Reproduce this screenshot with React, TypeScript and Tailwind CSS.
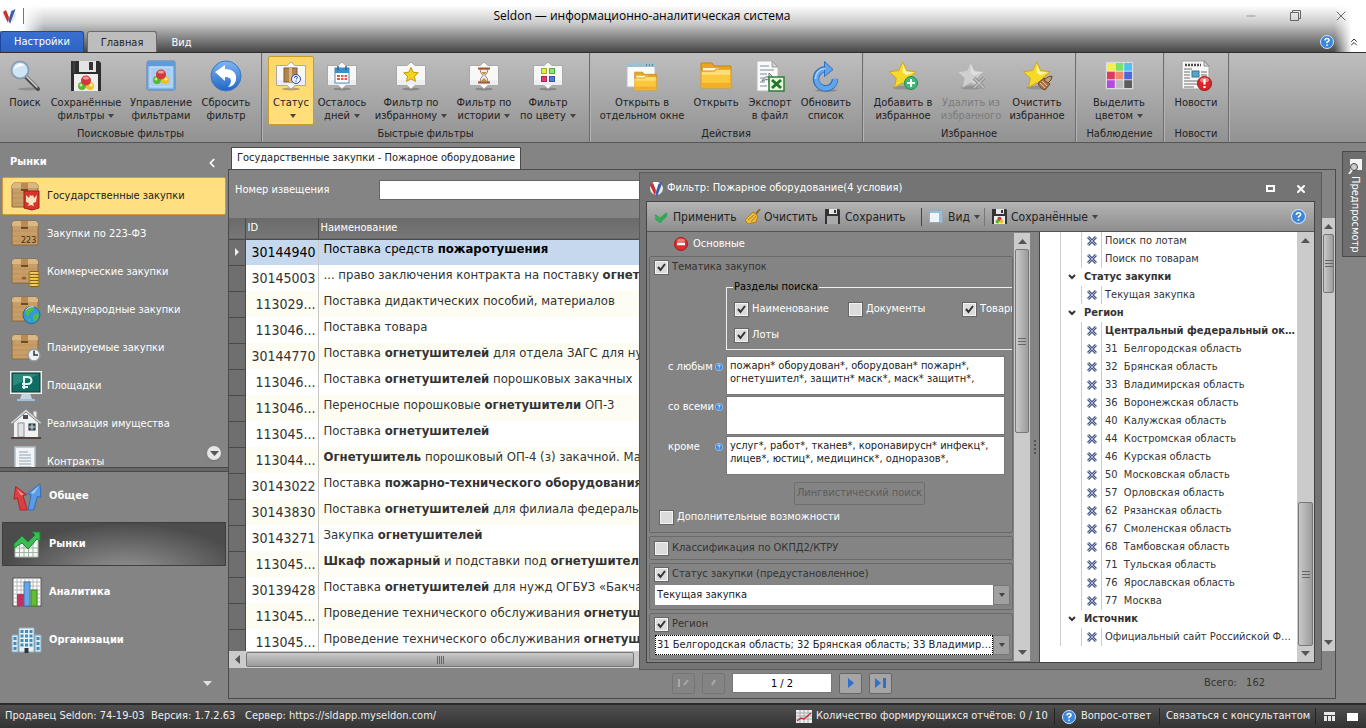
import clsx from "clsx";
import { ChevronLeft, ChevronsUp, Minus, X } from "lucide-react";
import type { ReactNode } from "react";

/* ---------- ribbon icons ---------- */

const Icon32 = ({ children }: { children: ReactNode }) => (
  <svg width="32" height="32" viewBox="0 0 32 32" aria-hidden="true">
    {children}
  </svg>
);

const Balls = ({ x, y }: { x: number; y: number }) => (
  <g>
    <circle cx={x - 4} cy={y + 3} r="4" fill="#5cb531" />
    <circle cx={x + 4} cy={y + 3} r="4" fill="#f0c020" />
    <circle cx={x - 5} cy={y + 2} r="1.5" fill="#b9ec8e" />
    <circle cx={x + 5} cy={y + 2} r="1.5" fill="#fff0a0" />
    <circle cx={x} cy={y - 2.5} r="5" fill="#d4373c" />
    <ellipse cx={x} cy={y - 5} rx="3" ry="1.6" fill="#f09a9a" />
  </g>
);

const SearchIcon = () => (
  <Icon32>
    <ellipse cx="20" cy="29" rx="11" ry="1.5" fill="#8d8d8d" />
    <path d="M17 17l12 12" stroke="#4c4c4c" strokeWidth="4" strokeLinecap="round" />
    <path d="M17 16l11 11" stroke="#d8d8d8" strokeWidth="1.5" strokeLinecap="round" />
    <circle cx="11" cy="10" r="8.5" fill="#cfe4f7" stroke="#8b9db0" strokeWidth="1.8" />
    <path d="M5 10a6.500 6.500 0 0 1 11-4.500c-3 0-8 1-11 4.500z" fill="#f6fbff" />
  </Icon32>
);

const DisketteIcon = () => (
  <Icon32>
    <path d="M1 1h28l2 2v28H1z" fill="#2d2d2d" />
    <path d="M4 1v12" stroke="#555" />
    <rect x="9" y="1" width="17" height="11" fill="#e4e4e4" />
    <rect x="19" y="2" width="4" height="8" fill="#333" />
    <rect x="4" y="14" width="24" height="17" fill="#eee" />
    <Balls x={16} y={23} />
  </Icon32>
);

const ManageIcon = () => (
  <Icon32>
    <rect x="2" y="1" width="28" height="29" rx="1.500" fill="#85b6e6" stroke="#4d85bd" />
    <rect x="3" y="2" width="26" height="4" fill="#5f9bd8" />
    <rect x="5" y="7" width="22" height="20" fill="#a6cdf2" stroke="#cfe5fa" />
    <Balls x={16} y={17} />
  </Icon32>
);

const ResetIcon = () => (
  <Icon32>
    <defs>
      <linearGradient id="reset-ball" x1="0" y1="0" x2="0" y2="1">
        <stop offset="0" stopColor="#7fb6f2" />
        <stop offset="1" stopColor="#1f66c4" />
      </linearGradient>
    </defs>
    <circle cx="16" cy="16" r="15" fill="url(#reset-ball)" stroke="#3d78c0" />
    <path
      d="M5 12l10-7v4c8 0 12 4 11 11-1 4-4 7-8 7 4-4 5-10-3-10v4z"
      fill="#fff"
    />
  </Icon32>
);

const Callout = ({ children }: { children: ReactNode }) => (
  <Icon32>
    <ellipse cx="16" cy="29" rx="9" ry="1.500" fill="#5b5b5b" opacity=".45" />
    <path
      d="M1.500 5.500h10.500L16 2l4 3.500h10.500v20h-10.500L16 29l-4-3.500h-10.500z"
      fill="#f8f8f8"
      stroke="#a9a9a9"
    />
    <path d="M2 20h28v5H2z" fill="#dfe4ea" opacity=".5" />
    {children}
  </Icon32>
);

const StatusIcon = () => (
  <Callout>
    <rect x="9" y="8" width="13" height="14" fill="#b08551" stroke="#7d5a30" />
    <rect x="14" y="8" width="3" height="14" fill="#dcb47c" />
    <circle cx="21" cy="19" r="4.500" fill="#e9f0ff" stroke="#2f4f9c" />
    <path d="M19.500 18q0-1.700 1.500-1.700t1.500 1.200q0 1-1.500 1.700M21 20.500v1.200" stroke="#2f4f9c" fill="none" />
  </Callout>
);

const CalendarIcon = () => (
  <Callout>
    <rect x="9" y="8" width="14" height="15" fill="#fff" stroke="#5b87ae" />
    <rect x="9" y="8" width="14" height="5" fill="#3d8fcb" />
    <path d="M12 6v4M20 6v4" stroke="#28648f" strokeWidth="1.500" />
    <path d="M11 15h10v5H11z" fill="#e05a50" />
    <path d="M11 17.500h10M14.500 15v5M18 15v5" stroke="#fff" />
  </Callout>
);

const STAR = "M16 1l4.300 9.400 10.200 1.200-7.600 7 2 10.200L16 23.700 7.100 28.800l2-10.200-7.600-7 10.200-1.200z";

const FavoriteFilterIcon = () => (
  <Callout>
    <path d={STAR} transform="translate(8 7) scale(.5)" fill="#f3d51f" stroke="#c29a10" strokeWidth="2" />
  </Callout>
);

const HistoryIcon = () => (
  <Callout>
    <path d="M12 9q0 4 3 6.500Q12 18 12 22h8q0-4-3-6.500Q20 13 20 9z" fill="#e8f0f5" stroke="#97836e" />
    <path d="M13.500 12h5L16 15zM13 21l3-3 3 3z" fill="#c88a3a" />
    <path d="M10 8.500h12M10 22.500h12" stroke="#a4562c" strokeWidth="2" />
  </Callout>
);

const ColorFilterIcon = () => (
  <Callout>
    <rect x="9.500" y="8.500" width="5" height="5" fill="#dff03c" stroke="#a3ad30" />
    <rect x="17.500" y="8.500" width="5" height="5" fill="#8be868" stroke="#5ea844" />
    <rect x="9.500" y="16.500" width="5" height="5" fill="#e2386c" stroke="#a92c50" />
    <rect x="17.500" y="16.500" width="5" height="5" fill="#5378e0" stroke="#3754a8" />
  </Callout>
);

const FolderShape = () => (
  <>
    <path d="M1 3h11l2 3h17v5H1z" fill="#e9a623" stroke="#c58612" />
    <path d="M3 8h16v4H3z" fill="#fff6d4" />
    <path d="M1 11h13l2-2h15v19H1z" fill="#fbc83d" stroke="#dd9a1b" />
    <path d="M2 12h13l2-2h13v5H2z" fill="#fddd7a" />
    <path d="M2 23h28v4H2z" fill="#f2ae2a" />
  </>
);

const OpenWindowIcon = () => (
  <Icon32>
    <rect x="1" y="3" width="28" height="24" fill="#fafafa" stroke="#b5bcc4" />
    <rect x="1" y="3" width="28" height="4" fill="#9cc0cf" />
    <path d="M20 5h1M23 5h1M26 5h1" stroke="#4a6c7c" strokeWidth="1.500" />
    <g transform="translate(8 10) scale(.72)">
      <FolderShape />
    </g>
  </Icon32>
);

const FolderIcon = () => (
  <Icon32>
    <FolderShape />
  </Icon32>
);

const ExportIcon = () => (
  <Icon32>
    <path d="M3 1h16l5 5v25H3z" fill="#fafafa" stroke="#b9b9b9" />
    <path d="M18 1v6h6z" fill="#d4d4d4" stroke="#9a9a9a" />
    <path d="M6 6h9M6 10h14M6 14h7M6 18h4M6 22h5M6 26h7" stroke="#a7b0b8" strokeWidth="1.500" />
    <path d="M8 21c2-4 5-5 7-4v-4l6 6-6 5v-4c-2-1-5 0-7 1z" fill="#ddd" stroke="#707070" />
    <rect x="15" y="17" width="15" height="14" fill="#e7f5e3" stroke="#2f7d35" strokeWidth="1.500" />
    <path d="M18 20l9 8M27 20l-9 8" stroke="#23752c" strokeWidth="3" />
  </Icon32>
);

const RefreshIcon = () => (
  <Icon32>
    <ellipse cx="16" cy="30.500" rx="11" ry="1.500" fill="#8a8a8a" />
    <path d="M17 9.500A9.500 9.500 0 1 0 25 19" stroke="#2f6fbe" strokeWidth="6.500" fill="none" />
    <path d="M17 9.500A9.500 9.500 0 1 0 25.300 18.500" stroke="#62a4ec" strokeWidth="4.500" fill="none" />
    <path d="M14.500 1.500L23 9.500l-8.500 7z" fill="#62a4ec" stroke="#2f6fbe" />
    <path d="M5.500 19A10 10 0 0 1 15.500 8.500" stroke="#a9d0f8" strokeWidth="1.500" fill="none" />
  </Icon32>
);

const StarShape = ({ muted }: { muted?: boolean }) => (
  <g transform="translate(1 1) scale(.92)">
    <ellipse cx="16" cy="29" rx="11" ry="2" fill="#777" opacity=".5" />
    <path d={STAR} fill={muted ? "#cfcfcf" : "#f6d929"} stroke={muted ? "#b5b5b5" : "#d0a313"} />
    <path d="M16 3l3.700 8.300 8.800 1.200-9 3-3.500-3z" fill={muted ? "#dfdfdf" : "#fdf3a0"} />
  </g>
);

const AddFavoriteIcon = () => (
  <Icon32>
    <StarShape />
    <circle cx="24" cy="23" r="6.500" fill="#3fb878" stroke="#1e8a50" />
    <path d="M24 19v8M20 23h8" stroke="#fff" strokeWidth="2" />
  </Icon32>
);

const RemoveFavoriteIcon = () => (
  <Icon32>
    <StarShape muted />
    <path d="M19 18l10 10M29 18L19 28" stroke="#8e8e8e" strokeWidth="3.500" />
    <path d="M19 18l10 10M29 18L19 28" stroke="#c4c4c4" strokeWidth="1.500" />
  </Icon32>
);

const ClearFavoriteIcon = () => (
  <Icon32>
    <StarShape />
    <path d="M17 23l6-5 6 6-5 6c-3-1-6-3-7-7z" fill="#a8744a" stroke="#704524" />
    <path d="M23 20l4-3 4-1-1 4-3 3z" fill="#c4a078" stroke="#704524" />
    <path d="M19 23l5 5M21 21l5 5" stroke="#e8c8a0" />
  </Icon32>
);

const PALETTE = ["#f3f04a", "#7fe069", "#4ec3ee", "#de3a60", "#f08a68", "#4f66dc", "#b54ae0", "#bdbdbd", "#5c5c5c"];

const PaletteIcon = () => (
  <Icon32>
    <rect x="3" y="2" width="27" height="27" fill="#f4f4f4" stroke="#c4c4c4" />
    {PALETTE.map((c, i) => (
      <rect key={c} x={4 + (i % 3) * 8.6} y={3 + Math.floor(i / 3) * 8.6} width="7.800" height="7.800" fill={c} />
    ))}
  </Icon32>
);

const NewsIcon = () => (
  <Icon32>
    <path d="M2 1h23l4 5v23H2z" fill="#f7f7f7" stroke="#a3a3a3" />
    <path d="M24 1v5h5z" fill="#d5d5d5" stroke="#8e8e8e" />
    <path d="M5 5h16" stroke="#4d4d4d" strokeWidth="2.500" strokeDasharray="2 1" />
    <path d="M4 9h8M4 12h6M4 15h6M4 18h6M4 21h10M4 24h10M4 27h10M21 12h6M21 15h6M12 21h8M12 24h5" stroke="#9d9d9d" strokeWidth="1.500" />
    <rect x="12" y="11" width="7" height="6" fill="#58a4cc" stroke="#3c7494" />
    <circle cx="24.500" cy="23.500" r="7" fill="#d8262b" stroke="#a01015" />
    <ellipse cx="24.500" cy="20" rx="4.500" ry="2.500" fill="#ee8080" />
    <path d="M24.500 19v5.500M24.500 26v2" stroke="#fff" strokeWidth="2.200" />
  </Icon32>
);

/* ---------- sidebar icons ---------- */

const BoxShape = () => (
  <>
    <path d="M2 5l2-2h22l2 2v22H2z" fill="#c79d68" stroke="#8b683d" />
    <path d="M2 5l2-2h22l2 2v3H2z" fill="#dab886" />
    <rect x="11" y="3" width="7" height="7" fill="#b98b52" />
    <path d="M11 10h7" stroke="#4f3516" strokeWidth="1.500" />
    <path d="M3 13h24M3 18h24M3 23h24" stroke="#bc9059" />
  </>
);

const BoxGovIcon = () => (
  <Icon32>
    <BoxShape />
    <path d="M14 11h15v17l-7 2-8-2z" fill="#d8342a" stroke="#a01f18" />
    <path
      d="M16 15l3 3 1-3 2 1 1-1 1 3 3-3-1 7-3 1 1 3-3-1-3 1 1-3-3-1z"
      fill="#f7e3c0"
    />
  </Icon32>
);

const Box223Icon = () => (
  <Icon32>
    <BoxShape />
    <text x="11" y="25" fontSize="8" fill="#3f2c14" fontFamily="DejaVu Sans">
      223
    </text>
  </Icon32>
);

const BoxCoinsIcon = () => (
  <Icon32>
    <BoxShape />
    {[17, 20, 23, 26, 29].map((y) => (
      <ellipse key={y} cx="24" cy={y} rx="5.500" ry="1.700" fill="#f5cf53" stroke="#7b5b17" />
    ))}
    <ellipse cx="14" cy="22" rx="2.500" ry="1.500" fill="#8a6430" />
  </Icon32>
);

const BoxGlobeIcon = () => (
  <Icon32>
    <BoxShape />
    <circle cx="21.500" cy="21" r="8.500" fill="#2f9bdc" stroke="#1f6aa8" />
    <path d="M15 17l5-4 4 1-2 4-3 1v3l-3-1zM23 21l5-2 1 4-4 5-2-3zM17 24l3 1v4z" fill="#57b947" />
    <path d="M16 16c2-3 6-4 8-3" stroke="#d8f0ff" fill="none" />
  </Icon32>
);

const BoxClockIcon = () => (
  <Icon32>
    <BoxShape />
    <circle cx="24" cy="23" r="6" fill="#eef2f4" stroke="#8f9aa2" strokeWidth="1.500" />
    <path d="M24 18.500V23h4" stroke="#333" strokeWidth="1.500" fill="none" />
  </Icon32>
);

const MonitorIcon = () => (
  <Icon32>
    <path d="M12 23h8l2 6H10z" fill="#c5d3dd" />
    <path d="M7 29h18v2H7z" fill="#9fc0dc" />
    <rect x="0" y="1" width="32" height="23" fill="#e9eff2" />
    <rect x="2" y="3" width="28" height="19" fill="#0f6e64" stroke="#11332f" />
    <path d="M3 4h26L3 16z" fill="#2a8a7c" />
    <path d="M14 19V7h4a3 3 0 0 1 0 7h-6M12 17h6" stroke="#d9f4ec" strokeWidth="2" fill="none" />
  </Icon32>
);

const HouseIcon = () => (
  <Icon32>
    <path d="M23 3h4v7h-4z" fill="#e8e8e8" stroke="#8d8d8d" />
    <path d="M4 14L16 3l12 11v16H4z" fill="#f2f2f2" />
    <path d="M0 15L16 1l16 14-2 1L16 4 2 16z" fill="#d5d8da" stroke="#858a8c" />
    <rect x="13" y="7" width="5" height="4" fill="#4b4f55" />
    <rect x="8" y="15" width="6" height="14" fill="#dfe3e5" stroke="#8d9397" />
    <rect x="19" y="16" width="6" height="6" fill="#4a6a74" stroke="#20262a" />
    <path d="M22 16v6M19 19h6" stroke="#c8dade" />
    <path d="M1 30h30" stroke="#53433c" strokeWidth="2" />
  </Icon32>
);

const ContractIcon = () => (
  <Icon32>
    <rect x="5" y="1" width="20" height="30" fill="#f2f5f7" stroke="#b4bfc7" strokeWidth="1.500" />
    <path d="M9 6h9M9 9h12M9 12h12M9 15h12M9 18h12M9 21h12M9 24h12" stroke="#8fa1ad" strokeWidth="1" />
  </Icon32>
);

const GeneralIcon = () => (
  <Icon32>
    <g transform="translate(2 3) scale(.9)">
      <path d="M1 18L3 4l12 9-4 1 5 16H8L5 17z" fill="#dd3f40" stroke="#aa2022" />
      <path d="M17 30l3-17-4-1L30 1l1 15-4-1-4 15z" fill="#5a9ce8" stroke="#2b69b4" />
      <path d="M4 6l8 7-3 1z" fill="#f29a98" />
      <path d="M29 3l-9 8 3 1z" fill="#a9cdf6" />
    </g>
  </Icon32>
);

const MarketsIcon = () => (
  <Icon32>
    <path d="M4 17l8-5 8 6 7-9v20H4z" fill="#f4f7f4" stroke="#aab8aa" />
    <path d="M4 20h23M4 24.500h23M8.500 14v15M13 12v17M17.500 15v14M22 12v17" stroke="#a0b4a0" />
    <path d="M3 16l8-8 6 6 7-7-3-3h8v9l-3-2-9 10-6-6-8 5z" fill="#3bbd55" stroke="#1d8435" />
  </Icon32>
);

const AnalyticsIcon = () => (
  <Icon32>
    <rect x="2" y="2" width="28" height="28" fill="#fff" stroke="#555" />
    <path d="M6 2v28M10 2v28M14 2v28M18 2v28M22 2v28M26 2v28M2 6h28M2 10h28M2 14h28M2 18h28M2 22h28M2 26h28" stroke="#b8b8b8" />
    <rect x="6" y="18" width="7" height="12" fill="#c2305e" />
    <rect x="13" y="6" width="6" height="24" fill="#6aa5e6" stroke="#3d74b4" />
    <rect x="20" y="14" width="6" height="16" fill="#62bd35" stroke="#3d8a1c" />
  </Icon32>
);

const OrganizationsIcon = () => (
  <Icon32>
    <path d="M1 11h6v17H1zM24 11h6v17h-6z" fill="#d7e8f2" stroke="#87a8bb" />
    <path d="M8 4h15v24H8z" fill="#e6f1f8" stroke="#90aec0" />
    <path d="M11 6v17M15.500 6v17M20 6v17" stroke="#3e8bb8" strokeWidth="3" strokeDasharray="3 1.500" />
    <path d="M4 13v14M27 13v14" stroke="#3e8bb8" strokeWidth="3" strokeDasharray="3 2" />
    <rect x="13.500" y="24" width="4" height="5" fill="#333" />
  </Icon32>
);

/* ---------- small icons ---------- */

const Logo = () => (
  <svg width="15" height="16" viewBox="0 0 15 16" aria-hidden="true">
    <circle cx="7.500" cy="7.500" r="6.500" fill="#e9ebf2" />
    <path d="M1 4l3-2 3 7-1 6z" fill="#c9302f" />
    <path d="M13.500 1L8 16 6.500 12l3-9z" fill="#3c5fa8" />
    <path d="M4 1l3 8 2-8z" fill="#fff" />
  </svg>
);

const HelpBall = ({ size }: { size: number }) => (
  <svg width={size} height={size} viewBox="0 0 14 14" aria-hidden="true">
    <circle cx="7" cy="7" r="6.500" fill="#3a86dc" stroke="#cfe3fa" />
    <path d="M5 5.500q0-2 2-2t2 1.700q0 1-2 2v1M7 9.500v1.500" stroke="#fff" strokeWidth="1.500" fill="none" />
  </svg>
);

const Arrow = ({ up, className }: { up?: boolean; className?: string }) => (
  <svg width="9" height="5" viewBox="0 0 9 5" className={clsx("shrink-0", className)} aria-hidden="true">
    <path d={up ? "M0 5l4.500-5L9 5z" : "M0 0l4.500 5L9 0z"} fill="currentColor" />
  </svg>
);

const DropMark = () => (
  <svg width="6" height="4" viewBox="0 0 6 4" className="ml-1 inline-block align-middle" aria-hidden="true">
    <path d="M0 0h6L3 4z" fill="#444" />
  </svg>
);

const BlueCross = () => (
  <svg width="10" height="10" viewBox="0 0 10 10" className="shrink-0" aria-hidden="true">
    <path d="M1 1l8 8M9 1L1 9" stroke="#4a5a82" strokeWidth="3" />
    <path d="M1 1l8 8M9 1L1 9" stroke="#a9b8dc" strokeWidth="1" />
  </svg>
);

const MiniDisk = ({ colored }: { colored?: boolean }) => (
  <svg width="15" height="15" viewBox="0 0 15 15" aria-hidden="true">
    <path d="M0 0h14l1 1v14H0z" fill="#333" />
    <rect x="4" y="0" width="8" height="5" fill="#e6e6e6" />
    <rect x="9" y="1" width="2" height="3" fill="#333" />
    <rect x="2" y="7" width="11" height="8" fill={colored ? "#eee" : "#aaa"} />
    {colored && (
      <>
        <circle cx="7.500" cy="10" r="2.200" fill="#d4373c" />
        <circle cx="5.500" cy="12.500" r="2" fill="#5cb531" />
        <circle cx="9.500" cy="12.500" r="2" fill="#f0c020" />
      </>
    )}
  </svg>
);

/* ---------- data ---------- */

interface RibbonButton {
  lines: string[];
  icon: ReactNode;
  width: string;
  drop?: boolean;
  active?: boolean;
  disabled?: boolean;
}

const RIBBON: { title: string; width: string; pad?: string; buttons: RibbonButton[] }[] = [
  {
    title: "Поисковые фильтры",
    width: "w-[262px]",
    buttons: [
      { lines: ["Поиск"], icon: <SearchIcon />, width: "w-[50px]" },
      { lines: ["Сохранённые", "фильтры"], icon: <DisketteIcon />, width: "w-[72px]", drop: true },
      { lines: ["Управление", "фильтрами"], icon: <ManageIcon />, width: "w-[78px]" },
      { lines: ["Сбросить", "фильтр"], icon: <ResetIcon />, width: "w-[52px]" },
    ],
  },
  {
    title: "Быстрые фильтры",
    width: "w-[328px]",
    pad: "pl-[6px]",
    buttons: [
      { lines: ["Статус", ""], icon: <StatusIcon />, width: "w-[46px]", drop: true, active: true },
      { lines: ["Осталось", "дней"], icon: <CalendarIcon />, width: "w-[56px]", drop: true },
      { lines: ["Фильтр по", "избранному"], icon: <FavoriteFilterIcon />, width: "w-[82px]", drop: true },
      { lines: ["Фильтр по", "истории"], icon: <HistoryIcon />, width: "w-[64px]", drop: true },
      { lines: ["Фильтр", "по цвету"], icon: <ColorFilterIcon />, width: "w-[64px]", drop: true },
    ],
  },
  {
    title: "Действия",
    width: "w-[273px]",
    pad: "pl-[6px]",
    buttons: [
      { lines: ["Открыть в", "отдельном окне"], icon: <OpenWindowIcon />, width: "w-[92px]" },
      { lines: ["Открыть"], icon: <FolderIcon />, width: "w-[56px]" },
      { lines: ["Экспорт", "в файл"], icon: <ExportIcon />, width: "w-[52px]" },
      { lines: ["Обновить", "список"], icon: <RefreshIcon />, width: "w-[60px]" },
    ],
  },
  {
    title: "Избранное",
    width: "w-[213px]",
    pad: "pl-[6px]",
    buttons: [
      { lines: ["Добавить в", "избранное"], icon: <AddFavoriteIcon />, width: "w-[68px]" },
      { lines: ["Удалить из", "избранного"], icon: <RemoveFavoriteIcon />, width: "w-[68px]", disabled: true },
      { lines: ["Очистить", "избранное"], icon: <ClearFavoriteIcon />, width: "w-[64px]" },
    ],
  },
  {
    title: "Наблюдение",
    width: "w-[88px]",
    pad: "pl-[10px]",
    buttons: [{ lines: ["Выделить", "цветом"], icon: <PaletteIcon />, width: "w-[66px]", drop: true }],
  },
  {
    title: "Новости",
    width: "w-[65px]",
    pad: "pl-[6px]",
    buttons: [{ lines: ["Новости"], icon: <NewsIcon />, width: "w-[52px]" }],
  },
];

const MARKETS = [
  { label: "Государственные закупки", icon: <BoxGovIcon />, active: true },
  { label: "Закупки по 223-ФЗ", icon: <Box223Icon /> },
  { label: "Коммерческие закупки", icon: <BoxCoinsIcon /> },
  { label: "Международные закупки", icon: <BoxGlobeIcon /> },
  { label: "Планируемые закупки", icon: <BoxClockIcon /> },
  { label: "Площадки", icon: <MonitorIcon /> },
  { label: "Реализация имущества", icon: <HouseIcon /> },
  { label: "Контракты", icon: <ContractIcon /> },
];

const SECTIONS = [
  { label: "Общее", icon: <GeneralIcon /> },
  { label: "Рынки", icon: <MarketsIcon />, active: true },
  { label: "Аналитика", icon: <AnalyticsIcon /> },
  { label: "Организации", icon: <OrganizationsIcon /> },
];

const ROWS: { id: string; name: ReactNode }[] = [
  { id: "30144940", name: <>Поставка средств <b>пожаротушения</b></> },
  { id: "30145003", name: <>... право заключения контракта на поставку <b>огнетушителей</b></> },
  { id: "113029...", name: "Поставка дидактических пособий, материалов" },
  { id: "113046...", name: "Поставка товара" },
  { id: "30144770", name: <>Поставка <b>огнетушителей</b> для отдела ЗАГС для нужд</> },
  { id: "113046...", name: <>Поставка <b>огнетушителей</b> порошковых закачных</> },
  { id: "113046...", name: <>Переносные порошковые <b>огнетушители</b> ОП-3</> },
  { id: "113045...", name: <>Поставка <b>огнетушителей</b></> },
  { id: "113044...", name: <><b>Огнетушитель</b> порошковый ОП-4 (з) закачной. Масса</> },
  { id: "30143022", name: <>Поставка <b>пожарно-технического оборудования</b></> },
  { id: "30143830", name: <>Поставка <b>огнетушителей</b> для филиала федерального</> },
  { id: "30143271", name: <>Закупка <b>огнетушителей</b></> },
  { id: "113045...", name: <><b>Шкаф пожарный</b> и подставки под <b>огнетушители</b></> },
  { id: "30139428", name: <>Поставка <b>огнетушителей</b> для нужд ОГБУЗ «Бакчарская»</> },
  { id: "113045...", name: <>Проведение технического обслуживания <b>огнетушителей</b></> },
  { id: "113045...", name: <>Проведение технического обслуживания <b>огнетушителей</b></> },
];

const TREE: { title?: string; items: string[] }[] = [
  { items: ["Поиск по лотам", "Поиск по товарам"] },
  { title: "Статус закупки", items: ["Текущая закупка"] },
  {
    title: "Регион",
    items: [
      "Центральный федеральный округ",
      "31  Белгородская область",
      "32  Брянская область",
      "33  Владимирская область",
      "36  Воронежская область",
      "40  Калужская область",
      "44  Костромская область",
      "46  Курская область",
      "50  Московская область",
      "57  Орловская область",
      "62  Рязанская область",
      "67  Смоленская область",
      "68  Тамбовская область",
      "71  Тульская область",
      "76  Ярославская область",
      "77  Москва",
    ],
  },
  { title: "Источник", items: ["Официальный сайт Российской Федерации"] },
];

/* ---------- shared controls ---------- */

function Checkbox({ label, checked, className }: { label: string; checked?: boolean; className?: string }) {
  return (
    <label className={clsx("flex items-center gap-[4px] whitespace-nowrap", className)}>
      <span className="relative flex size-[13px] shrink-0">
        <input
          type="checkbox"
          defaultChecked={checked}
          className="peer size-[13px] appearance-none border border-[#f4f4f4] bg-[#dcdcdc] outline outline-[#666]"
        />
        <svg
          viewBox="0 0 13 13"
          className="pointer-events-none absolute inset-0 hidden peer-checked:block"
          aria-hidden="true"
        >
          <path d="M3 6l2.500 3L10 3" stroke="#333" strokeWidth="2" fill="none" />
        </svg>
      </span>
      {label}
    </label>
  );
}

function VScroll({ className, thumb, atEnd }: { className?: string; thumb: string; atEnd?: boolean }) {
  return (
    <div className={clsx("flex shrink-0 flex-col items-center bg-[#cbcbcb] py-[6px] text-[#555]", className)}>
      <Arrow up />
      <div className={clsx("flex w-full flex-1 flex-col items-center px-px py-[5px]", atEnd && "justify-end")}>
        <div
          className={clsx(
            "flex w-full flex-col items-center justify-center gap-[2px] rounded-[2px] border border-[#777] bg-linear-to-r from-[#c9c9c9] to-[#9c9c9c]",
            thumb,
          )}
        >
          <i className="h-px w-2 bg-[#666]" />
          <i className="h-px w-2 bg-[#666]" />
          <i className="h-px w-2 bg-[#666]" />
        </div>
      </div>
      <Arrow />
    </div>
  );
}

/* ---------- page parts ---------- */

function TitleBar() {
  return (
    <header className="relative flex h-[53px] shrink-0 flex-col border-b border-[#303030] bg-linear-to-b from-white from-10% via-[#cacaca] via-45% to-[#484848]">
      {/* white glow in the corners */}
      <div className="absolute top-0 left-0 h-[31px] w-[44px] bg-linear-to-r from-white from-50% to-transparent" />
      <div className="absolute top-0 right-0 h-[52px] w-[32px] bg-linear-to-l from-white from-45% to-transparent" />
      <div className="relative flex h-[31px] items-center pl-[2px]">
        <Logo />
        <i className="ml-[6px] h-4 w-px bg-[#777]" />
        <h1 className="flex-1 pr-[106px] text-center font-['Open_Sans','Noto_Sans',sans-serif] text-[12px] text-black">
          Seldon — информационно-аналитическая система
        </h1>
        <div className="absolute right-[17px] flex items-center gap-[32px] text-[#666]">
          <button type="button" aria-label="Свернуть"><Minus size={14} strokeWidth={1} /></button>
          <button type="button" aria-label="Восстановить">
            <svg width="11" height="11" viewBox="0 0 11 11" fill="none" stroke="currentColor">
              <path d="M.5 2.500h8v8h-8zM2.500 2.500v-2h8v8h-2" />
            </svg>
          </button>
          <button type="button" aria-label="Закрыть"><X size={16} strokeWidth={1.500} /></button>
        </div>
      </div>
      <nav className="relative flex flex-1 items-stretch text-white">
        <button type="button" className="w-[84px] rounded-t-[3px] border border-b-0 border-[#1d469c] bg-linear-to-b from-[#3a6fd0] to-[#2c64c4]">
          Настройки
        </button>
        <button type="button" className="ml-[3px] w-[70px] rounded-t-[3px] border border-b-0 border-[#6a6a6a] bg-[#bdbdbd] pt-[2px] text-[#222]">
          Главная
        </button>
        <button type="button" className="w-[49px] pt-[3px]">Вид</button>
        <div className="ml-auto flex items-center gap-[14px] pr-[6px] text-[#333]">
          <button type="button" aria-label="Справка"><HelpBall size={14} /></button>
          <button type="button" aria-label="Свернуть ленту"><ChevronsUp size={12} /></button>
        </div>
      </nav>
    </header>
  );
}

function Ribbon() {
  return (
    <div className="flex h-[90px] shrink-0 border-b border-[#555] bg-linear-to-b from-[#bebebe] to-[#929292] text-[#222]">
      {RIBBON.map((group) => (
        <section
          key={group.title}
          className={clsx("flex shrink-0 flex-col border-r border-[#6d6d6d] shadow-[1px_0_0_#b4b4b4]", group.width)}
        >
          <div className={clsx("flex h-[74px] items-start pt-[3px]", group.pad)}>
            {group.buttons.map((b) => (
              <button
                type="button"
                key={b.lines.join(" ")}
                disabled={b.disabled}
                className={clsx(
                  "flex h-[69px] flex-col items-center rounded-[2px] border pt-[3px] leading-[13px] whitespace-nowrap",
                  b.width,
                  b.active ? "border-[#c99a2c] bg-linear-to-b from-[#ffd766] to-[#ffe07c]" : "border-transparent",
                  b.disabled && "text-[#7b7b7b]",
                )}
              >
                {b.icon}
                <span className="mt-[4px]">
                  {b.lines.map((line, i) => (
                    <span key={i} className="block">
                      {line}
                      {b.drop && i === b.lines.length - 1 && <DropMark />}
                    </span>
                  ))}
                </span>
              </button>
            ))}
          </div>
          <h2 className="text-center leading-[14px]">{group.title}</h2>
        </section>
      ))}
    </div>
  );
}

function Sidebar() {
  return (
    <aside className="flex w-[228px] shrink-0 flex-col text-white">
      <div className="flex h-[34px] shrink-0 items-center justify-between pt-[5px] pr-[9px] pl-[10px]">
        <h2 className="font-bold">Рынки</h2>
        <button type="button" aria-label="Свернуть панель"><ChevronLeft size={14} strokeWidth={3} /></button>
      </div>
      <div className="relative min-h-0 flex-1 overflow-hidden px-[2px]">
        <ul>
          {MARKETS.map((m) => (
            <li key={m.label}>
              <a
                href="#"
                className={clsx(
                  "flex h-[38px] items-center gap-[5px] rounded-[2px] border pl-[7px]",
                  m.active ? "border-[#d09a34] bg-[#ffdf80] text-[#222]" : "border-transparent",
                )}
              >
                {m.icon}
                {m.label}
              </a>
            </li>
          ))}
        </ul>
        <button
          type="button"
          aria-label="Прокрутить вниз"
          className="absolute right-[7px] bottom-[7px] flex size-[14px] items-center justify-center rounded-full bg-[#e6e6e6] text-[#555] shadow"
        >
          <Arrow />
        </button>
      </div>
      <div className="h-[5px] shrink-0 border-y border-[#4a4a4a] bg-[#666]" />
      <ul className="shrink-0 px-[2px] font-bold">
        {SECTIONS.map((s) => (
          <li key={s.label} className="h-[48px] py-[2px]">
            <a
              href="#"
              className={clsx(
                "flex h-[44px] items-center gap-[6px] border pl-[8px]",
                s.active
                  ? "border-[#3f3f3f] bg-[#585858] bg-radial-[at_55%_120%] from-[#959595] to-[#4c4c4c] to-70%"
                  : "border-transparent",
              )}
            >
              {s.icon}
              {s.label}
            </a>
          </li>
        ))}
      </ul>
      <div className="flex h-[39px] shrink-0 items-center justify-end pr-[16px] text-[#e0e0e0]">
        <Arrow />
      </div>
    </aside>
  );
}

function Grid() {
  return (
    <div className="flex min-h-0 flex-1">
      <div className="flex min-w-0 flex-1 flex-col">
        <div className="min-h-0 flex-1 overflow-hidden bg-white">
          <table className="w-full table-fixed border-collapse text-[13px] text-[#333]">
            <colgroup>
              <col className="w-[16px]" />
              <col className="w-[73px]" />
              <col className="w-[322px]" />
              <col />
            </colgroup>
            <thead>
              <tr className="h-[21px] border-b border-[#4a4a4a] bg-linear-to-b from-[#6a6a6a] to-[#777] text-left text-[11px] text-white">
                <th className="border-r border-[#4a4a4a]" />
                <th className="border-r border-[#4a4a4a] pl-[2px] font-normal">ID</th>
                <th className="pl-[2px] font-normal">Наименование</th>
                <th />
              </tr>
            </thead>
            <tbody>
              {ROWS.map((row, i) => (
                <tr
                  key={i}
                  className={clsx(
                    "h-[26px]",
                    i === 0 ? "bg-[#c5d8ee] text-black" : i % 2 === 0 ? "bg-[#fdfdf3]" : "bg-white",
                  )}
                >
                  <td className="border border-l-0 border-[#4a4a4a] bg-[#6f6f6f]">
                    {i === 0 && (
                      <svg width="4" height="8" viewBox="0 0 4 8" className="mx-auto" aria-hidden="true">
                        <path d="M0 0l4 4-4 4z" fill="#eee" />
                      </svg>
                    )}
                  </td>
                  <td className="border-r border-[#c8c8c8] p-0 pr-[2px] text-right text-[14px] leading-[18px]">{row.id}</td>
                  <td className="overflow-hidden p-0 pb-[6px] pl-[5px] leading-[18px] whitespace-nowrap">{row.name}</td>
                  <td />
                </tr>
              ))}
            </tbody>
          </table>
        </div>
        {/* horizontal scroll bar */}
        <div className="flex h-[17px] shrink-0 items-center bg-[#cbcbcb] pl-[6px]">
          <svg width="5" height="9" viewBox="0 0 5 9" aria-hidden="true">
            <path d="M5 0v9L0 4.500z" fill="#555" />
          </svg>
          <div className="ml-[6px] flex h-[15px] w-[388px] items-center justify-center gap-[1px] rounded-[2px] border border-[#777] bg-linear-to-b from-[#c9c9c9] to-[#9c9c9c]">
            <i className="h-2 w-px bg-[#666]" />
            <i className="h-2 w-px bg-[#666]" />
            <i className="h-2 w-px bg-[#666]" />
            <i className="h-2 w-px bg-[#666]" />
          </div>
        </div>
      </div>
      <VScroll className="mb-[17px] w-[13px]" thumb="h-[59px]" />
    </div>
  );
}

const pagerButton = "flex h-[21px] w-[23px] items-center justify-center rounded-[2px] border";

function Pager() {
  return (
    <div className="flex h-[30px] shrink-0 items-center pr-[70px] pl-[443px]">
      <button type="button" disabled aria-label="Первая" className={clsx(pagerButton, "border-[#757575] text-[#aaa]")}>
        <svg width="11" height="8" viewBox="0 0 11 8"><path d="M1 0v8M10 1L6 6" stroke="currentColor" strokeWidth="2" /></svg>
      </button>
      <button type="button" disabled aria-label="Назад" className={clsx(pagerButton, "ml-[7px] border-[#757575] text-[#aaa]")}>
        <svg width="5" height="8" viewBox="0 0 5 8"><path d="M4 1L1 6" stroke="currentColor" strokeWidth="2" /></svg>
      </button>
      <input
        aria-label="Страница"
        defaultValue="1 / 2"
        className="ml-[7px] h-[20px] w-[100px] border border-[#777] bg-white text-center text-black"
      />
      <button type="button" aria-label="Вперёд" className={clsx(pagerButton, "ml-[7px] border-[#666] bg-[#a5a5a5]")}>
        <svg width="6" height="10" viewBox="0 0 6 10"><path d="M0 0l6 5-6 5z" fill="#2f6fd0" /></svg>
      </button>
      <button type="button" aria-label="Последняя" className={clsx(pagerButton, "ml-[7px] border-[#666] bg-[#a5a5a5]")}>
        <svg width="12" height="10" viewBox="0 0 12 10"><path d="M0 0l6 5-6 5zM8 0h3v10H8z" fill="#2f6fd0" /></svg>
      </button>
      <p className="ml-auto text-[#333]">
        Всего: <span className="ml-[6px]">162</span>
      </p>
    </div>
  );
}

const WORD_FIELDS = [
  { id: "any", label: "с любым", value: "пожарн* оборудован*, оборудован* пожарн*,\nогнетушител*, защитн* маск*, маск* защитн*," },
  { id: "all", label: "со всеми", value: "" },
  { id: "except", label: "кроме", value: "услуг*, работ*, тканев*, коронавирусн* инфекц*,\nлицев*, юстиц*, медицинск*, одноразов*," },
];

const filterBox = "rounded-[2px] border border-[#6a6a6a]";

function FilterSelect({ label, value, dotted }: { label: string; value: string; dotted?: boolean }) {
  return (
    <div className={clsx(filterBox, "flex h-[47px] shrink-0 flex-col pl-[5px]")}>
      <Checkbox label={label} checked className="h-[21px] text-[#333]" />
      <div className="flex h-[20px] pr-[2px]">
        <select
          aria-label={label}
          className={clsx(
            "min-w-0 flex-1 appearance-none bg-white text-ellipsis text-[#222]",
            dotted ? "border border-dotted border-black pl-px" : "pl-[2px]",
          )}
        >
          <option>{value}</option>
        </select>
        <span className="flex w-[17px] items-center justify-center border border-[#777] bg-[#a0a0a0] pr-[4px]">
          <DropMark />
        </span>
      </div>
    </div>
  );
}

function FilterForm() {
  return (
    <div className="flex w-[367px] shrink-0 flex-col overflow-hidden pr-px pl-[2px] text-white">
      <div className="flex h-[24px] shrink-0 items-center gap-[5px] pl-[25px]">
        <svg width="14" height="14" viewBox="0 0 14 14" aria-hidden="true">
          <circle cx="7" cy="7" r="6.500" fill="#d93030" stroke="#a81a1a" />
          <ellipse cx="7" cy="3.500" rx="4" ry="2" fill="#ee7a7a" />
          <path d="M3 7h8" stroke="#fff" strokeWidth="2.500" />
        </svg>
        Основные
      </div>
      <div className="flex min-h-0 flex-1 flex-col gap-[3px]">
        <div className={clsx(filterBox, "flex h-[277px] shrink-0 flex-col overflow-hidden pl-[5px]")}>
          <Checkbox label="Тематика закупок" checked className="h-[20px] shrink-0 text-[#333]" />
          <fieldset className="mt-[3px] ml-[71px] w-[400px] border border-[#eee] pb-[1px] pl-[8px]">
            <legend className="-ml-[2px] px-[1px] leading-[14px] text-black">Разделы поиска</legend>
            <div className="grid auto-rows-[26px] grid-cols-[114px_114px_114px] pt-[2px]">
              <Checkbox label="Наименование" checked />
              <Checkbox label="Документы" />
              <Checkbox label="Товары" checked />
              <Checkbox label="Лоты" checked />
            </div>
          </fieldset>
          <div className="mt-[6px] pr-[7px]">
            {WORD_FIELDS.map((f) => (
              <div key={f.id} className="flex h-[40px] items-stretch">
                <div className="flex w-[71px] items-start justify-between pt-[3px] pr-[3px] pl-[13px]">
                  <label htmlFor={f.id} className="whitespace-nowrap">{f.label}</label>
                  <span className="mt-[4px]"><HelpBall size={8} /></span>
                </div>
                <textarea
                  id={f.id}
                  defaultValue={f.value}
                  className="mb-px min-w-0 flex-1 resize-none overflow-hidden border border-[#777] bg-white px-[3px] pt-[2px] leading-[13px] whitespace-pre text-[#222]"
                />
              </div>
            ))}
          </div>
          <button
            type="button"
            disabled
            className="mt-[6px] ml-[139px] h-[23px] w-[131px] shrink-0 rounded-[2px] border border-[#6f6f6f] whitespace-nowrap text-[#5c5c5c]"
          >
            Лингвистический поиск
          </button>
          <Checkbox label="Дополнительные возможности" className="mt-[3px] ml-[5px] h-[18px]" />
        </div>
        <div className={clsx(filterBox, "flex h-[24px] shrink-0 items-center pl-[5px]")}>
          <Checkbox label="Классификация по ОКПД2/КТРУ" className="text-[#333]" />
        </div>
        <FilterSelect label="Статус закупки (предустановленное)" value="Текущая закупка" />
        <FilterSelect label="Регион" value="31  Белгородская область; 32  Брянская область; 33  Владимирская область" dotted />
      </div>
    </div>
  );
}

function FilterTree() {
  return (
    <div className="min-w-0 flex-1 overflow-hidden bg-white pl-[20px] text-[#333]">
      {TREE.map((group, i) => (
        <section key={i} className="border-l border-[#ccc]">
          {group.title && (
            <h3 className="flex h-[18px] items-center gap-[8px] pl-[7px] font-bold">
              <svg width="8" height="6" viewBox="0 0 8 6" aria-hidden="true">
                <path d="M1 1l3 3 3-3" stroke="#333" strokeWidth="2" fill="none" />
              </svg>
              {group.title}
            </h3>
          )}
          <ul className="ml-[20px] border-l border-[#ccc]">
            {group.items.map((item) => (
              <li key={item} className="flex h-[18px] items-stretch">
                <span className="flex w-[20px] shrink-0 items-center justify-center border-r border-[#ccc]">
                  <BlueCross />
                </span>
                <span
                  className={clsx(
                    "min-w-0 flex-1 overflow-hidden pr-[2px] pl-[3px] leading-[18px] text-ellipsis whitespace-pre",
                    item.startsWith("Центральный") && "font-bold",
                  )}
                >
                  {item}
                </span>
              </li>
            ))}
          </ul>
        </section>
      ))}
    </div>
  );
}

function FilterWindow() {
  return (
    <div
      role="dialog"
      aria-label="Фильтр"
      className="absolute top-[2px] right-[13px] bottom-[28px] flex w-[683px] flex-col border border-[#5a5a5a] bg-[#747474] px-[6px] pb-[6px]"
    >
      <div className="flex h-[28px] shrink-0 items-center pt-[3px] pl-[3px] text-white">
        <Logo />
        <h2 className="ml-[3px] flex-1">Фильтр: Пожарное оборудование(4 условия)</h2>
        <button type="button" aria-label="Развернуть" className="mr-[20px]">
          <svg width="9" height="7" viewBox="0 0 9 7"><path d="M1 1h7v5H1z" fill="none" stroke="#fff" strokeWidth="2" /></svg>
        </button>
        <button type="button" aria-label="Закрыть" className="mr-[8px]"><X size={12} strokeWidth={4} /></button>
      </div>
      <div className="flex min-h-0 flex-1 flex-col border border-[#444] bg-[#848484]">
        <div className="flex h-[30px] shrink-0 items-center border-b border-[#555] bg-linear-to-b from-[#b4b4b4] to-[#8e8e8e] pl-[7px] text-[12px] whitespace-nowrap text-[#222]">
          <button type="button" className="flex w-[91px] items-center gap-[5px]">
            <svg width="14" height="12" viewBox="0 0 14 12">
              <path d="M1 4l5 4 7-6M1 7l5 4 7-7" stroke="#2da854" strokeWidth="2" fill="none" />
            </svg>
            Применить
          </button>
          <button type="button" className="flex w-[80px] items-center gap-[3px]">
            <svg width="16" height="15" viewBox="0 0 16 15">
              <path d="M15 0l-4 5" stroke="#8a6a20" strokeWidth="2" />
              <path d="M8 3l5 4-2 6-8 2-3-4z" fill="#eebc3e" stroke="#ad7d1b" />
              <path d="M3 11l6-5M6 13l5-6" stroke="#ad7d1b" />
            </svg>
            Очистить
          </button>
          <button type="button" className="flex w-[96px] items-center gap-[5px]">
            <MiniDisk />
            Сохранить
          </button>
          <button type="button" className="flex w-[63px] items-center gap-[5px] border-l border-[#444] pl-[7px]">
            <svg width="14" height="13" viewBox="0 0 14 13">
              <path d="M.5.5h13v12H.5z" fill="#eef4f7" stroke="#9ab" />
              <path d="M1 1h12v2H1zM10 3h3v9h-3z" fill="#8fc0d8" />
            </svg>
            <span>Вид<DropMark /></span>
          </button>
          <button type="button" className="flex items-center gap-[4px] border-l border-[#777] pl-[7px]">
            <MiniDisk colored />
            <span>Сохранённые<DropMark /></span>
          </button>
          <button type="button" aria-label="Справка" className="mr-[8px] ml-auto"><HelpBall size={15} /></button>
        </div>
        <div className="flex min-h-0 flex-1">
          <FilterForm />
          <VScroll className="my-px w-[16px]" thumb="h-[184px]" />
          <div className="flex w-[10px] shrink-0 flex-col items-center justify-center gap-[2px] border-r border-[#444]">
            <i className="size-[2px] bg-[#555]" />
            <i className="size-[2px] bg-[#555]" />
            <i className="size-[2px] bg-[#555]" />
            <i className="size-[2px] bg-[#555]" />
          </div>
          <FilterTree />
          <VScroll className="w-[17px]" thumb="h-[144px]" atEnd />
        </div>
      </div>
    </div>
  );
}

function Workspace() {
  return (
    <main className="flex min-w-0 flex-1 flex-col pb-[4px]">
      <div className="flex h-[26px] shrink-0 items-end pl-[3px]">
        <button type="button" className="h-[22px] w-[290px] border border-b-0 border-[#4a4a4a] bg-white whitespace-nowrap text-[#222]">
          Государственные закупки - Пожарное оборудование
        </button>
      </div>
      <div className="relative flex min-h-0 flex-1 flex-col border border-[#4a4a4a]">
        <div className="flex h-[48px] shrink-0 items-start pt-[10px] pl-[6px] text-white">
          <label htmlFor="notice" className="w-[144px] leading-[20px]">Номер извещения</label>
          <input id="notice" className="h-[20px] w-[480px] border border-[#666] bg-white text-black" />
        </div>
        <Grid />
        <Pager />
        <FilterWindow />
      </div>
    </main>
  );
}

function StatusBar() {
  return (
    <footer className="flex h-[25px] shrink-0 items-center border-t-2 border-[#2a2a2a] bg-linear-to-b from-[#505050] to-[#333] pl-[5px] whitespace-nowrap text-[#eee]">
      <span className="w-[146px]">Продавец Seldon: 74-19-03</span>
      <span className="w-[94px]">Версия: 1.7.2.63</span>
      <span>Сервер: https://sldapp.myseldon.com/</span>
      <div className="ml-auto flex items-center divide-x divide-[#222]">
        <span className="flex w-[266px] items-center gap-[4px] pl-[7px]">
          <svg width="16" height="13" viewBox="0 0 16 13" aria-hidden="true">
            <path d="M0 0h16v13H0z" fill="#eee" />
            <path d="M0 3h16M0 6h16M0 9h16M4 0v13M8 0v13M12 0v13" stroke="#aaa" />
            <path d="M1 11l4-3 3 1 7-6" stroke="#c43434" strokeWidth="1.500" fill="none" />
          </svg>
          Количество формирующихся отчётов: 0 / 10
        </span>
        <a href="#" className="flex w-[105px] items-center gap-[5px] pl-[7px]">
          <HelpBall size={14} />
          Вопрос-ответ
        </a>
        <a href="#" className="w-[156px] pl-[6px]">Связаться с консультантом</a>
        <span className="flex items-center gap-[12px] px-[8px]">
          <svg width="11" height="9" viewBox="0 0 11 9" aria-hidden="true">
            <path d="M0 0h11v3H0zM0 4h3v5H0zM4 4h3v5H4zM8 4h3v5H8z" fill="#e8e8e8" />
          </svg>
          <i className="h-[8px] w-[11px] bg-white" />
        </span>
      </div>
    </footer>
  );
}

export default function App() {
  return (
    <div className="flex h-screen min-h-[600px] flex-col overflow-hidden bg-[#848484] font-['DejaVu_Sans_Condensed','Noto_Sans','DejaVu_Sans',sans-serif] text-[11px]">
      <TitleBar />
      <Ribbon />
      <div className="flex min-h-0 flex-1">
        <Sidebar />
        <Workspace />
        <div className="w-[30px] shrink-0 pt-[8px] pl-[6px]">
          <button
            type="button"
            className="flex h-[106px] w-full flex-col items-center gap-[2px] border border-r-0 border-[#4a4a4a] bg-[#6e6e6e] pt-[7px] text-white"
          >
            <svg width="14" height="15" viewBox="0 0 14 15" className="shrink-0" aria-hidden="true">
              <path d="M2 0h12v11H2z" fill="#f2f2f2" />
              <circle cx="6" cy="8" r="3.500" fill="#ccc" stroke="#444" />
              <path d="M4 11l-3 4" stroke="#eee" strokeWidth="2" />
            </svg>
            <span className="whitespace-nowrap [writing-mode:vertical-rl]">Предпросмотр</span>
          </button>
        </div>
      </div>
      <StatusBar />
    </div>
  );
}
